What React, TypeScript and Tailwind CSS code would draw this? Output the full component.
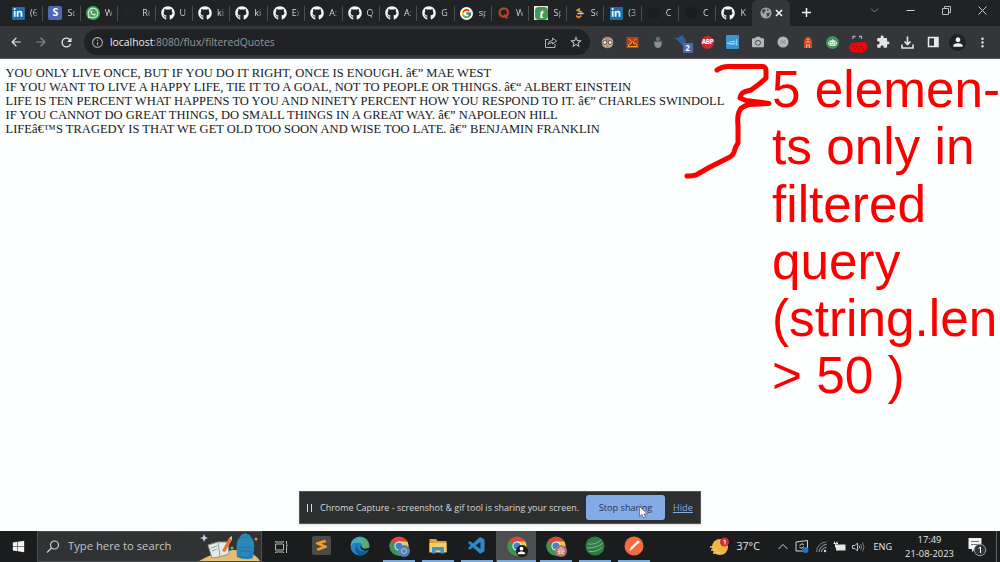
import React from "react";
import {
  FaGithub, FaLinkedinIn, FaWhatsapp, FaWindows, FaCamera, FaRobot, FaBug,
} from "react-icons/fa";
import { FcGoogle } from "react-icons/fc";
import { VscVscode } from "react-icons/vsc";
import {
  MdArrowBack, MdArrowForward, MdRefresh, MdInfoOutline, MdStarOutline, MdPerson, MdMoreVert, MdExtension,
} from "react-icons/md";

const octocat = <FaGithub size={14} color="#f4f5f6" />;

const linkedin = (
  <span className="flex h-[13px] w-[13px] items-center justify-center rounded-[1px] bg-[#1b70ab]">
    <FaLinkedinIn size={10} color="#eef6fc" className="shrink-0" />
  </span>
);

const tabs: { icon: React.ReactNode; title: string }[] = [
  { icon: linkedin, title: "(6" },
  {
    icon: (
      <span className="flex h-[14px] w-[14px] items-center justify-center rounded-[2px] bg-[#5068b0] text-[10.5px] font-bold text-white">S</span>
    ),
    title: "Sc",
  },
  {
    icon: (
      <span className="flex h-[14px] w-[14px] items-center justify-center rounded-full bg-[#46a25b]">
        <FaWhatsapp size={12} color="#e9f5eb" />
      </span>
    ),
    title: "W",
  },
  { icon: <span className="h-[11px] w-[11px] rounded-full border border-dotted border-[#2d3236]" />, title: "Re" },
  { icon: octocat, title: "U" },
  { icon: octocat, title: "ki" },
  { icon: octocat, title: "ki" },
  { icon: octocat, title: "Ex" },
  { icon: octocat, title: "A:" },
  { icon: octocat, title: "Q" },
  { icon: octocat, title: "A:" },
  { icon: octocat, title: "G" },
  {
    icon: (
      <span className="flex h-[13px] w-[13px] items-center justify-center rounded-full bg-white"><FcGoogle size={11} /></span>
    ),
    title: "sp",
  },
  {
    icon: (
      <svg width="12" height="12" viewBox="0 0 12 12" fill="none" stroke="#b5472e"><circle cx="5.800" cy="5.500" r="4.200" strokeWidth="2.200" /><path d="M6 7.500 L9.500 11.300" strokeWidth="1.800" /></svg>
    ),
    title: "W",
  },
  {
    icon: (
      <span className="flex h-[14px] w-[14px] items-center justify-center bg-[#e5eee3]">
        <span className="flex h-[13px] w-[13px] items-center justify-center rounded-[4px] bg-[#459a52] font-['Liberation_Serif',serif] text-[13px] font-bold italic leading-none text-white">t</span>
      </span>
    ),
    title: "Sp",
  },
  {
    icon: (
      <svg width="14" height="14" viewBox="0 0 14 14" fill="none" strokeWidth="1.6" strokeLinecap="round">
        <path d="M5 4.500 L7.500 3 M7 5 L9.500 6" stroke="#e8a23a" />
        <path d="M6 7.500 H11" stroke="#d9d4c8" />
        <path d="M4.500 10 L6.500 11.500 L9 10" stroke="#e0893a" />
      </svg>
    ),
    title: "Se",
  },
  { icon: linkedin, title: "(3" },
  { icon: <span className="h-[12px] w-[12px] rounded-full bg-[#1b1d1f]" />, title: "C" },
  { icon: <span className="h-[12px] w-[12px] rounded-full bg-[#1a1b1d]" />, title: "C" },
  { icon: octocat, title: "K" },
];

function TabStrip() {
  return (
    <div className="flex h-[26px] bg-[#202224]">
      <div className="flex w-[752px] shrink-0 pl-[6px]">
        {tabs.map((t, i) => (
          <div key={i} className="flex h-[26px] w-[37.4px] shrink-0 items-center pl-[5px]">
            <span className="flex w-[14px] shrink-0 items-center justify-center">{t.icon}</span>
            <span className="ml-[5px] w-[8px] overflow-hidden whitespace-nowrap bg-gradient-to-r from-[#e2e4e6] from-50% to-[#77797c] bg-clip-text text-[9px] text-transparent">
              {t.title}
            </span>
            <span className={`ml-[5px] h-[15px] w-px shrink-0 ${i === tabs.length - 1 ? "bg-transparent" : "bg-[#4c4f52]"}`} />
          </div>
        ))}
      </div>
      <div className="flex h-[26px] w-[38px] shrink-0 items-center justify-center gap-[3px] rounded-t-[6px] bg-[#35363a]">
        <svg width="12" height="12" viewBox="0 0 12 12">
          <circle cx="6" cy="6" r="5.500" fill="#9fa6ad" />
          <path d="M2 3 L5 2 L6 4 L4 5 L4.500 7 L2.500 6Z M6.500 6 L10 5.500 L9 9 L7 10Z M7 1.500 L9 3 L7.500 4Z" fill="#3c4248" />
        </svg>
        <svg width="8" height="8" viewBox="0 0 8 8" stroke="#f1f3f4" strokeWidth="1.600"><path d="M1 1 L7 7 M7 1 L1 7" /></svg>
      </div>
      <svg className="ml-[11px] mt-[7px] shrink-0" width="11" height="11" viewBox="0 0 11 11" stroke="#f1f3f4" strokeWidth="1.5"><path d="M5.500 1 V10 M1 5.500 H10" /></svg>
      <div className="ml-auto flex items-start gap-[27px] pr-[13px] pt-[6px]">
        <svg width="9" height="9" viewBox="0 0 9 9" fill="none" stroke="#808386"><path d="M1 2.500 L4.500 6 L8 2.500" /></svg>
        <svg width="9" height="9" viewBox="0 0 9 9" stroke="#d0d2d4"><path d="M0.500 4.500 H8.500" /></svg>
        <svg width="9" height="9" viewBox="0 0 9 9" fill="none" stroke="#b8babc"><path d="M0.500 2.500 H6.500 V8.500 H0.500Z M2.500 2.500 V0.500 H8.500 V6.500 H6.500" /></svg>
        <svg width="9" height="9" viewBox="0 0 9 9" stroke="#c8cacc"><path d="M0.500 0.500 L8.500 8.500 M8.500 0.500 L0.500 8.500" /></svg>
      </div>
    </div>
  );
}

const extensions: React.ReactNode[] = [
  <svg width="13" height="13" viewBox="0 0 13 13">
    <circle cx="6.500" cy="6.500" r="5.800" fill="#b8b2a6" />
    <path d="M3.500 2.500 Q6.500 0 9.500 2.500 L6.500 6Z M4.500 12 L6.500 8 L8.500 12Z" fill="#cf7e4a" />
    <circle cx="3.800" cy="6.500" r="2" fill="#e6e8e8" stroke="#4c5358" />
    <circle cx="9.200" cy="6.500" r="2" fill="#e6e8e8" stroke="#4c5358" />
  </svg>,
  <svg width="13" height="13" viewBox="0 0 13 13">
    <rect x="0.500" y="1" width="12" height="11" fill="#b34416" />
    <path d="M2 10.500 Q3 7 5 8 Q6.500 2 8 8 Q11 7 11 10.500Z M3 3 L5 5 M10 3 L8.500 4.500" fill="#8c280d" stroke="#f2a13b" />
  </svg>,
  <svg width="10" height="13" viewBox="0 0 10 13" fill="#8d9092"><circle cx="5" cy="3" r="2.200" fill="#6b6e70" /><path d="M1.500 5 H8.500 Q9.500 12 5 12 Q0.500 12 1.500 5Z" /><path d="M2 5.500 H8" stroke="#55585a" /></svg>,
  <span className="relative flex h-[18px] w-[18px]">
    <svg width="18" height="18" viewBox="0 0 18 18"><path d="M1 5 L4 5 L8 2 L12 7 L11 12 L8 12Z" fill="#2c619d" /></svg>
    <span className="absolute left-[9px] top-[10px] flex h-[10px] w-[10px] items-center justify-center rounded-[1px] bg-[#4d68ad] text-[8px] font-bold leading-none text-white">2</span>
  </span>,
  <span className="flex h-[13px] w-[13px] items-center justify-center rounded-full bg-[#d02a2a] text-[6.5px] font-bold leading-none tracking-[-0.4px] text-white">ABP</span>,
  <span className="flex h-[14px] w-[13px] items-center justify-center rounded-[1px] bg-[#3b94ce]">
    <svg width="11" height="9" viewBox="0 0 11 9" fill="none" stroke="#d3ebfa"><path d="M1 6 V4 M3 6.500 V3.500 M5 6.500 V3 M7 6.500 V2.500 M9.500 7 V1.500" strokeDasharray="1.500 0.700" strokeWidth="1.300" /></svg>
  </span>,
  <FaCamera size={12} color="#b4b6b8" />,
  <svg width="12" height="12" viewBox="0 0 12 12"><circle cx="6" cy="6" r="5.500" fill="#b5b6b6" /><path d="M3 4 L9 8 M9 4 L3 8" stroke="#858788" strokeWidth="0.800" /></svg>,
  <svg width="10" height="13" viewBox="0 0 10 13"><path d="M3 1 H7 L9 5 V12 H1 V5Z" fill="#cf4a25" /><path d="M4 3.500 H6 M3 7 L5 5 L7 7 M3.500 12 V9 H6.500 V12" fill="none" stroke="#f0b19a" /></svg>,
  <span className="flex h-[13px] w-[13px] items-center justify-center rounded-full bg-[#3d9658]"><FaRobot size={9} color="#dce6dd" /></span>,
  <svg width="20" height="22" viewBox="0 0 20 22">
    <path d="M5 8 V5.500 H7.500 M11 5.500 H13.500 V8" fill="none" stroke="#9fb0b8" strokeWidth="1.300" />
    <path d="M3 12 L17 11 L19.500 14 L18.500 19 L14 22 L3 21 L1 17Z" fill="#f20505" />
    <path d="M4 15.500 h2 M8 15.500 h2 M12 15.500 h2 M6 18 h2 M10 18 h2 M14 18 h2" stroke="#9b0707" strokeWidth="1.200" />
  </svg>,
  <MdExtension size={14} color="#e3e5e7" />,
  <svg width="13" height="13" viewBox="0 0 13 13" fill="none" stroke="#e3e5e7" strokeWidth="1.600"><path d="M6.500 0.500 V8 M3.500 5.500 L6.500 8.500 L9.500 5.500 M1 8.500 V12 H12 V8.500" /></svg>,
  <svg width="12" height="12" viewBox="0 0 12 12"><rect x="1.500" y="1.500" width="9.500" height="9" fill="none" stroke="#e7e8ea" strokeWidth="1.500" /><rect x="7" y="1" width="4" height="10" fill="#e7e8ea" /></svg>,
  <span className="flex h-[17px] w-[17px] items-center justify-center rounded-full bg-[#1f2123]"><MdPerson size={14} color="#f1f3f4" /></span>,
  <MdMoreVert size={15} color="#dadce0" />,
];

function Toolbar() {
  return (
    <div className="flex h-[33px] items-center border-b border-[#55575a] bg-[#35363a]">
      <div className="flex w-[84px] shrink-0 items-center gap-[11px] pl-[9px]">
        <MdArrowBack size={14} color="#dfe1e3" />
        <MdArrowForward size={14} color="#85888b" />
        <MdRefresh size={15} color="#dfe1e3" />
      </div>
      <div className="flex h-[26px] w-[506px] shrink-0 items-center rounded-full bg-[#202124] pl-[7px] pr-[7px]">
        <MdInfoOutline size={13} color="#a2a5a8" />
        <span className="ml-[6px] whitespace-nowrap text-[10.35px] leading-none text-[#94979a]">
          <span className="text-[#eceef0]">localhost</span>:8080/flux/filteredQuotes
        </span>
        <svg className="ml-auto" width="12" height="12" viewBox="0 0 12 12" fill="none" stroke="#b0b3b6"><path d="M3.500 3.500 H0.500 V11.500 H10 V8 M3 8.500 Q3.500 4.500 7.500 4.500 V2 L11.500 5 L7.500 8 V6.500 Q5 6.500 3 8.500Z" /></svg>
        <MdStarOutline className="ml-[12px]" size={14} color="#c5c8ca" />
      </div>
      <div className="ml-[5px] flex">
        {extensions.map((e, i) => (
          <span key={i} className="flex h-[26px] w-[25px] shrink-0 items-center justify-center">{e}</span>
        ))}
      </div>
    </div>
  );
}

const quotes = [
  "YOU ONLY LIVE ONCE, BUT IF YOU DO IT RIGHT, ONCE IS ENOUGH. â€\u201d MAE WEST",
  "IF YOU WANT TO LIVE A HAPPY LIFE, TIE IT TO A GOAL, NOT TO PEOPLE OR THINGS. â€\u201c ALBERT EINSTEIN",
  "LIFE IS TEN PERCENT WHAT HAPPENS TO YOU AND NINETY PERCENT HOW YOU RESPOND TO IT. â€\u201d CHARLES SWINDOLL",
  "IF YOU CANNOT DO GREAT THINGS, DO SMALL THINGS IN A GREAT WAY. â€\u201d NAPOLEON HILL",
  "LIFEâ€™S TRAGEDY IS THAT WE GET OLD TOO SOON AND WISE TOO LATE. â€\u201d BENJAMIN FRANKLIN",
];

function Page() {
  return (
    <main className="relative h-[472px] overflow-hidden bg-[#fdfefe]">
      <div className="flex justify-between">
        <div className="pl-[5.5px] pt-[7px] font-['Liberation_Serif',serif] text-[12.52px] leading-[14px] text-[#17191a]">
          {quotes.map((q) => (
            <p key={q} className="whitespace-nowrap">{q}</p>
          ))}
        </div>
        <div className="w-[228px] shrink-0 whitespace-nowrap pt-[2px] font-['Liberation_Sans',sans-serif] text-[51.3px] leading-[57.3px] text-[#fb0000]">
          <p>5 elemen-</p>
          <p>ts only in</p>
          <p>filtered</p>
          <p>query</p>
          <p>(string.len</p>
          <p>&gt; 50 )</p>
        </div>
      </div>
      <svg className="absolute left-[680px] top-0" width="96" height="125" viewBox="680 59 96 125" fill="none" stroke="#fb0000" strokeWidth="5" strokeLinecap="round" strokeLinejoin="round">
        <path d="M717 70 Q722 66.500 728 66.500 H763 Q766 67 766 71 V78 Q760 84 751 90 L744 92 Q741 93 740 98 L746 100.500 L769 103.500 L749 104.500 Q740 107 739 112 Q737 117 738 125 V143 Q735 147 734 152 Q733 156 728 158 L710 167 L697 174.500 Q694 176 687 176" />
      </svg>
      <div className="absolute left-[299px] top-[432px] flex h-[33px] w-[402px] items-center border border-[#55585a] bg-[#2c2e30] text-[9.2px] shadow">
        <span className="ml-[7px] flex h-[8px] w-[5px] justify-between border-x-[1.5px] border-[#d9dbdd]" />
        <span className="ml-[8px] w-[266px] shrink-0 whitespace-nowrap text-[8.97px] text-[#d6d8da]">Chrome Capture - screenshot &amp; gif tool is sharing your screen.</span>
        <span className="flex h-[25px] w-[79px] shrink-0 items-center justify-center rounded-[3px] bg-[#84aae8] text-[#28364d]">Stop sharing</span>
        <span className="ml-[8px] text-[#88abe4] underline">Hide</span>
      </div>
      <svg className="absolute left-[639px] top-[447px]" width="9" height="13" viewBox="0 0 9 13"><path d="M0.500 0.500 V10.500 L3 8.500 L4.500 12 L6.500 11 L5 8 H8.500Z" fill="#fff" stroke="#4b5563" strokeWidth="0.700" /></svg>
    </main>
  );
}

function Chrome({ badge }: { badge: React.ReactNode }) {
  return (
    <span className="relative flex h-[20px] w-[20px]">
      <svg width="20" height="20" viewBox="0 0 20 20">
        <circle cx="10" cy="10" r="9.500" fill="#d94a3c" />
        <path d="M10 10 L1.800 5.200 A9.500 9.500 0 0 0 10 19.500 L14.100 12.400Z" fill="#3f9355" />
        <path d="M10 10 L10 5.600 H18.400 A9.500 9.500 0 0 1 10 19.500 L14.100 12.400Z" fill="#efc64a" />
        <circle cx="10" cy="10" r="4.600" fill="#eef3f5" />
        <circle cx="10" cy="10" r="3.600" fill="#3c82cf" />
      </svg>
      <span className="absolute left-[9px] top-[9px] flex h-[12px] w-[12px] items-center justify-center overflow-hidden rounded-full">{badge}</span>
    </span>
  );
}

const apps: { icon: React.ReactNode; open?: boolean; active?: boolean }[] = [
  {
    icon: (
      <span className="flex h-[19px] w-[19px] items-center justify-center rounded-[2px] bg-[#4a4a4a]">
        <svg width="11" height="13" viewBox="0 0 13 15" fill="none" stroke="#f39a2b" strokeWidth="3.200"><path d="M11.500 2 L2 5 L11 9 L1.500 12.500" /></svg>
      </span>
    ),
  },
  {
    icon: (
      <svg width="20" height="20" viewBox="0 0 24 24">
        <circle cx="12" cy="12" r="11.500" fill="#2382bb" />
        <path d="M2 7 Q10 -3 19 4 Q25 10 22 15 Q17 17 14 14 Q17 8 10 8 Q5 7 1 12Z" fill="#43b2b9" />
        <path d="M18 3 Q25 9 22 15 Q17 17 14 14 Q18 9 14 5Z" fill="#58ae62" />
        <path d="M12 8 Q6 11 10 16 Q15 21 22 17 Q18 23 12 23.500 Q3 19 8 11Z" fill="#155b91" />
        <path d="M13 11 Q11 16 18 18 L24 16 L22 14 Q16 17 14 13Z" fill="#1b1c1d" />
      </svg>
    ),
  },
  { open: true, icon: <Chrome badge={<span className="flex h-[12px] w-[12px] items-center justify-center bg-[#557fac]"><span className="h-[6px] w-[6px] rounded-full border border-[#afc5df]" /></span>} /> },
  {
    open: true,
    icon: (
      <svg width="18" height="16" viewBox="0 0 18 16"><path d="M0.500 1 H7 L8.500 3 H17.500 V14 H0.500Z" fill="#d9a33c" /><path d="M0.500 5 H17.500 V14.500 H0.500Z" fill="#f5ce6b" /><path d="M3 15.500 V9 H15 V15.500 H11.500 V12.500 H6.500 V15.500Z" fill="#3e94c3" /></svg>
    ),
  },
  { open: true, icon: <VscVscode size={20} color="#2d8ac7" /> },
  { open: true, active: true, icon: <Chrome badge={<span className="flex h-[12px] w-[12px] items-center justify-center bg-[#17191a]"><MdPerson size={11} color="white" /></span>} /> },
  { open: true, icon: <Chrome badge={<span className="flex h-[12px] w-[12px] items-center justify-center bg-[#b56f6a]"><FaBug size={8} color="#e1c4ba" /></span>} /> },
  {
    open: true,
    icon: (
      <svg width="20" height="20" viewBox="0 0 20 20"><circle cx="10" cy="10" r="9.500" fill="#317b44" /><path d="M3 8 Q11 9 16 4 M2 12 Q12 12 18 7 M4 15.500 Q13 16 17 11" fill="none" stroke="#80b68b" /></svg>
    ),
  },
  {
    open: true,
    icon: (
      <svg width="20" height="20" viewBox="0 0 20 20"><circle cx="10" cy="10" r="9.500" fill="#f36b3d" /><path d="M5 15 L7 11 L13.500 5 L15 6.500 L8.500 13Z" fill="#fff1e9" /><circle cx="14" cy="6" r="1.500" fill="#fff1e9" /></svg>
    ),
  },
];

function Taskbar() {
  return (
    <footer className="flex h-[31px] bg-[#1b1c1d] text-[#e5e6e7]">
      <div className="flex w-[37px] shrink-0 items-center justify-center"><FaWindows size={13} color="#f4f4f4" /></div>
      <div className="flex w-[225px] shrink-0 items-center border border-[#4b4d4e] bg-[#303233]">
        <svg className="ml-[8px]" width="14" height="14" viewBox="0 0 14 14" fill="none" stroke="#d0d2d3" strokeWidth="1.200"><circle cx="8.500" cy="5" r="4" /><path d="M5.500 8 L1 12.500" /></svg>
        <span className="ml-[8px] whitespace-nowrap text-[11.25px] text-[#c2c4c5]">Type here to search</span>
        <svg className="ml-auto shrink-0" width="62" height="29" viewBox="0 0 62 29">
          <path d="M0 29 Q15 20 34 18 Q53 17 61 29Z" fill="#e6bc74" />
          <path d="M9 13 L19 10 L29 10 L30 22 L20 25 L13 26Z" fill="#e4ebe4" stroke="#87978f" />
          <path d="M19 11 L21 24 M12 16 L18 14 M13 19 L18 17" stroke="#89a6a2" />
          <path d="M23 19 L30 6 L33 8 L26 20Z" fill="#e97331" />
          <path d="M30 6 L33 8 L33 4Z" fill="#f4c094" />
          <path d="M41 5 Q42 2 45 2 Q46 0 48 2 Q51 2 52 5 Q56 9 55 17 L54 26 Q47 29 38 25 Q36 9 41 5Z" fill="#2988b8" />
          <path d="M40 15 Q47 17 53 15 M41 19 H52 V25 H41Z M43 6 Q47 4 50 6" fill="none" stroke="#1e6d9e" strokeWidth="0.800" />
          <path d="M5 2 L6.500 5 L9 6 L6.500 7 L5 10 L4 7 L1 6 L4 5Z" fill="#d4cfeb" />
          <circle cx="57" cy="7" r="1.500" fill="#e98f36" /><circle cx="33" cy="16" r="1.500" fill="#60bd91" />
        </svg>
      </div>
      <div className="flex w-[39px] shrink-0 items-center justify-center">
        <svg className="mr-[2px]" width="14" height="14" viewBox="0 0 14 14" fill="none" stroke="#b7b9ba"><path d="M1.500 4 H9.500 V10 H1.500Z M1.500 1 V2 H9.500 V1 M1.500 13 V12 H9.500 V13 M12.500 1 V4 M12.500 7 V13" /><path d="M12 5.500 H13.500" strokeWidth="2" /></svg>
      </div>
      <div className="flex">
        {apps.map((a, i) => (
          <div key={i} className={`flex w-[39.1px] shrink-0 flex-col items-center ${a.active ? "bg-[#4c4d4e]" : ""}`}>
            <span className="ml-px flex h-[29px] items-center">{a.icon}</span>
            {a.open && <span className={`ml-px h-[2px] bg-[#7ba9dc] ${a.active ? "w-full" : "w-[32px]"}`} />}
          </div>
        ))}
      </div>
      <div className="ml-auto flex items-center">
        <svg width="20" height="20" viewBox="0 0 20 20"><circle cx="10" cy="10" r="8" fill="#f0b547" /><path d="M1 13 H7 M3 16 H10 M0 10 H4" stroke="#f3c767" strokeWidth="1.500" /><circle cx="14.500" cy="5" r="4.500" fill="#d42e31" /><path d="M13.500 4 L15 3 V7.500" fill="none" stroke="#fff" /></svg>
        <span className="ml-[6px] w-[42px] text-[10.6px]">37°C</span>
        <svg width="10" height="8" viewBox="0 0 10 8" fill="none" stroke="#d0d2d3"><path d="M0.500 6 L5 1.500 L9.500 6" /></svg>
        <svg className="ml-[7px]" width="15" height="15" viewBox="0 0 15 15"><path d="M1 3 L12.500 1.500 V12 L1 12Z M4.500 7 Q6 3.500 9 5.500 M9 7.500 Q7 10.500 4.500 8.500" fill="none" stroke="#d0d2d3" /><circle cx="10.500" cy="11" r="3" fill="#1479c4" /></svg>
        <svg className="ml-[5px]" width="13" height="13" viewBox="0 0 13 13" fill="none"><path d="M1.500 12 A10 10 0 0 1 11.500 2" stroke="#7f8283" /><path d="M4 12 A8 8 0 0 1 11.500 4.500 M6.500 12 A5 5 0 0 1 11.500 7.500" stroke="#a9abac" /><circle cx="10" cy="11" r="1.200" fill="#d8dada" /></svg>
        <svg className="ml-[5px]" width="13" height="11" viewBox="0 0 13 11"><path d="M3 3.500 H12.500 V9.500 H3Z" fill="#e8e9e9" /><path d="M0.500 2.500 H5 M1.500 0.500 V2.500 M4 0.500 V2.500 M2.500 3 V6.500" stroke="#e8e9e9" /></svg>
        <svg className="ml-[6px]" width="13" height="12" viewBox="0 0 13 12" fill="none" stroke="#c2c4c5"><path d="M0.500 4.500 H3 L5.500 2 V10 L3 7.500 H0.500Z M7 4.500 Q8.500 6 7 7.500" /><path d="M8.500 3 Q11 6 8.500 9 M10.500 1.500 Q13.500 6 10.500 10.500" stroke="#77797a" /></svg>
        <span className="ml-[8px] text-[9.1px]">ENG</span>
        <div className="ml-[10px] flex w-[52px] flex-col items-center whitespace-nowrap text-[9.35px] leading-[14px]"><span className="ml-[3px]">17:49</span><span className="ml-[3px]">21-08-2023</span></div>
        <svg className="ml-[14px]" width="19" height="21" viewBox="0 0 19 21"><path d="M0.500 2 H13.500 V13 H7 L4 16 V13 H0.500Z" fill="#f2f2f2" /><path d="M3 5.500 H11 M3 8.500 H11" stroke="#77797a" /><circle cx="12" cy="14" r="5.800" fill="#333637" stroke="#939698" /><path d="M10.500 12.500 L12.500 11 V17" stroke="#fff" fill="none" /></svg>
        <span className="ml-[9px] mr-[3px] h-[31px] w-px bg-[#626465]" />
      </div>
    </footer>
  );
}

export default function App() {
  return (
    <div className="flex h-[562px] w-[1000px] flex-col overflow-hidden font-['Open_Sans',sans-serif]">
      <TabStrip />
      <Toolbar />
      <Page />
      <Taskbar />
    </div>
  );
}
